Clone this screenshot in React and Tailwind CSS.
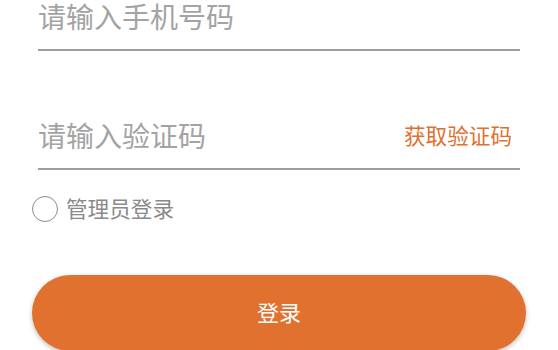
import React, { useState } from 'react';

const font = { fontFamily: '"Noto Sans CJK SC", "Noto Sans", sans-serif' };

const App = () => {
  const [phone, setPhone] = useState('');
  const [code, setCode] = useState('');
  const [admin, setAdmin] = useState(false);

  return (
    <div className="w-[558px] h-[350px] bg-white overflow-hidden font-['Noto_Sans_CJK_SC',sans-serif]">
      <div className="mx-[38px] h-[51px] border-b-2 border-[#9e9e9e]">
        <input
          type="text"
          value={phone}
          onChange={(e) => setPhone(e.target.value)}
          placeholder="请输入手机号码"
          className="w-full h-[32px] leading-[32px] text-[28px] text-[#333] placeholder-[#a3a3a3] outline-none bg-transparent font-['Noto_Sans_CJK_SC',sans-serif]"
        />
      </div>

      <div className="mx-[38px] mt-[55px] h-[64px] pb-[4px] border-b-2 border-[#9e9e9e] flex items-center">
        <input
          type="text"
          value={code}
          onChange={(e) => setCode(e.target.value)}
          placeholder="请输入验证码"
          className="flex-1 min-w-0 h-[40px] text-[28px] text-[#333] placeholder-[#a3a3a3] outline-none bg-transparent font-['Noto_Sans_CJK_SC',sans-serif]"
        />
        <button className="pr-[8px] text-[21.6px] text-[#e0702f]">获取验证码</button>
      </div>

      <label className="ml-[32px] mt-[26px] h-[26px] flex items-center gap-[8px] cursor-pointer w-fit">
        <span
          onClick={() => setAdmin(!admin)}
          className="w-[26px] h-[26px] rounded-full border-[1.5px] border-[#8a8a8a] flex items-center justify-center"
        >
          {admin && <span className="w-[14px] h-[14px] rounded-full bg-[#e0702f]" />}
        </span>
        <span className="text-[21.6px] text-[#8a8a8a] pb-[2px]" style={font}>管理员登录</span>
      </label>

      <button className="mx-[32px] mt-[53px] w-[494px] h-[76px] pb-[3px] rounded-full bg-[#e1712f] text-white text-[22px] shadow-[0_2px_5px_rgba(0,0,0,0.25)]">
        登录
      </button>
    </div>
  );
};

export default App;
